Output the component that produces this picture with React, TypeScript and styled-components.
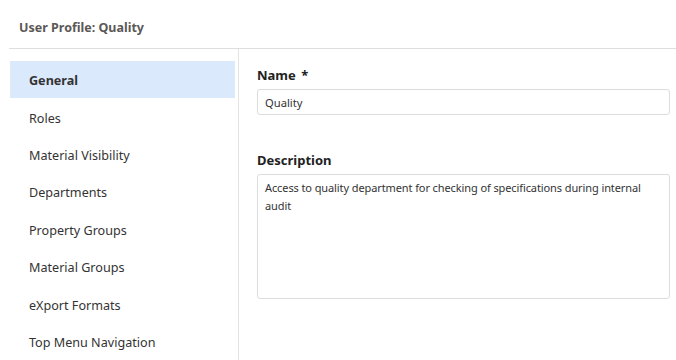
import styled, { createGlobalStyle } from 'styled-components';

const sections = [
  'General',
  'Roles',
  'Material Visibility',
  'Departments',
  'Property Groups',
  'Material Groups',
  'eXport Formats',
  'Top Menu Navigation',
];

const GlobalStyle = createGlobalStyle`
  body {
    margin: 0;
    background: #ffffff;
    font-family: "Noto Sans", "Open Sans", sans-serif;
    color: #2b2b2b;
  }
`;

const App = () => (
  <>
    <GlobalStyle />
    <StyledPage>
      <StyledHeader>User Profile: Quality</StyledHeader>
      <StyledBody>
        <StyledSidebar>
          {sections.map((s, i) => (
            <StyledNavItem key={s} $active={i === 0}>
              {s}
            </StyledNavItem>
          ))}
        </StyledSidebar>
        <StyledForm>
          <StyledLabel>
            Name <span>*</span>
          </StyledLabel>
          <StyledInput defaultValue="Quality" />
          <StyledLabel $spaced>Description</StyledLabel>
          <StyledTextArea defaultValue="Access to quality department for checking of specifications during internal audit" />
        </StyledForm>
      </StyledBody>
    </StyledPage>
  </>
);

const StyledPage = styled.div`
  margin-left: 9px;
  height: 360px;
  display: flex;
  flex-direction: column;
`;

const StyledHeader = styled.div`
  height: 49px;
  box-sizing: border-box;
  padding: 6px 10px 0;
  display: flex;
  align-items: center;
  font-size: 12.5px;
  font-weight: 700;
  color: #5b5856;
  border-bottom: 1px solid #dedede;
`;

const StyledBody = styled.div`
  flex: 1;
  display: flex;
  min-height: 0;
`;

const StyledSidebar = styled.div`
  width: 230px;
  box-sizing: border-box;
  border-right: 1px solid #e3e3e3;
  padding: 12px 3px 0 1px;
  display: flex;
  flex-direction: column;
`;

const StyledNavItem = styled.div<{ $active?: boolean }>`
  height: 37.4px;
  flex-shrink: 0;
  display: flex;
  align-items: center;
  padding: 2px 0 0 19px;
  box-sizing: border-box;
  font-size: 12.6px;
  font-weight: ${(p) => (p.$active ? 700 : 400)};
  color: #333333;
  background: ${(p) => (p.$active ? '#dbe9fc' : 'transparent')};
`;

const StyledForm = styled.div`
  flex: 1;
  padding: 17px 6px 0 18px;
  display: flex;
  flex-direction: column;
`;

const StyledLabel = styled.div<{ $spaced?: boolean }>`
  font-size: 13px;
  font-weight: 700;
  line-height: 18px;
  color: #222222;
  margin-top: ${(p) => (p.$spaced ? '36px' : '0')};
  margin-bottom: 5px;

  span {
    margin-left: 2px;
  }
`;

const StyledInput = styled.input`
  height: 26px;
  box-sizing: border-box;
  border: 1px solid #dcdcdc;
  border-radius: 3px;
  padding: 0 7px;
  font-family: inherit;
  font-size: 11.2px;
  color: #333333;
  outline: none;
`;

const StyledTextArea = styled.textarea`
  height: 125px;
  box-sizing: border-box;
  border: 1px solid #dcdcdc;
  border-radius: 3px;
  padding: 4px 6px 4px 7px;
  font-family: inherit;
  font-size: 11px;
  line-height: 18px;
  letter-spacing: -0.1px;
  color: #333333;
  resize: none;
  outline: none;
`;

export default App;
